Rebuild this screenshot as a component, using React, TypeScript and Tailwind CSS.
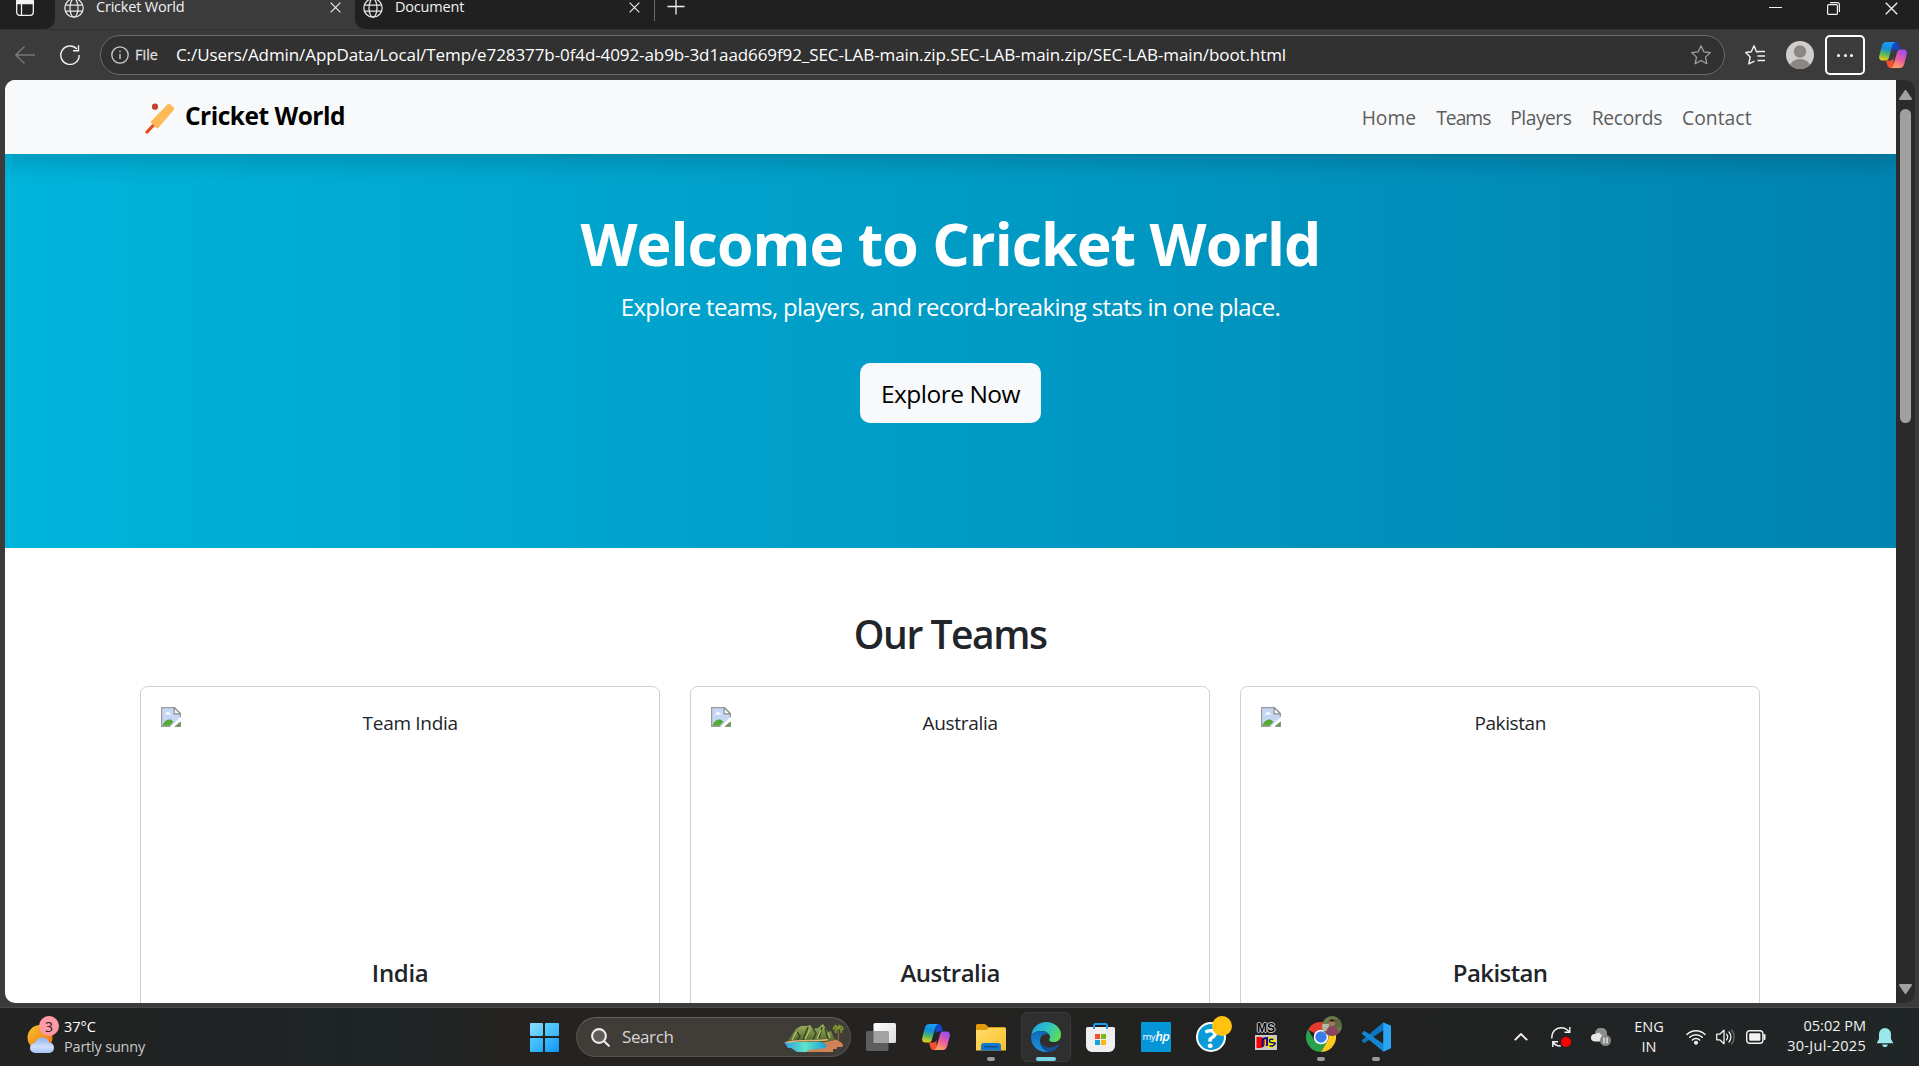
import type { ReactNode } from "react";

function Globe() {
  return (
    <svg className="h-5 w-5 shrink-0" viewBox="0 0 20 20" fill="none" stroke="#e6e6e6" strokeWidth="1.25">
      <circle cx="10" cy="10" r="9.2" />
      <ellipse cx="10" cy="10" rx="4" ry="9.2" />
      <path d="M1.5 7h17M1.5 13h17" />
    </svg>
  );
}

function Cross({ className }: { className: string }) {
  return (
    <svg className={className} viewBox="0 0 12 12" fill="none" stroke="#f2f2f2" strokeWidth="1.2">
      <path d="M.7.7l10.6 10.6M11.3.7L.7 11.3" />
    </svg>
  );
}

function Copilot({ id, className }: { id: string; className: string }) {
  return (
    <svg className={className} viewBox="0 0 28 26">
      <defs>
        <linearGradient id={`${id}a`} x1="0.5" y1="0" x2="0.3" y2="1">
          <stop offset="0" stopColor="#1b9df8" />
          <stop offset="0.35" stopColor="#128fd8" />
          <stop offset="0.65" stopColor="#52b567" />
          <stop offset="1" stopColor="#f4cc10" />
        </linearGradient>
        <linearGradient id={`${id}b`} x1="0.7" y1="0" x2="0.3" y2="1">
          <stop offset="0" stopColor="#9a4df5" />
          <stop offset="0.5" stopColor="#ea5aa0" />
          <stop offset="1" stopColor="#ffa55c" />
        </linearGradient>
      </defs>
      <path d="M13 0h3.400c2 0 2.900 1.400 3.500 3.400L21 7.500h-4.500c-1.600 0-2.400.9-2.900 2.500z" fill="#1746c9" />
      <path d="M15 26h-3.400c-2 0-2.900-1.400-3.500-3.400L7 18.500h4.500c1.600 0 2.400-.9 2.900-2.500z" fill="#f4512f" />
      <path d="M7.500 0h9c-1.700.3-2.600 1.700-3.200 3.800l-3.400 12c-.5 1.800-1.500 2.700-3.200 2.700H3.500C.8 18.500-.4 16.500.3 13.700l2.400-9.500C3.400 1.400 5 0 7.500 0z" fill={`url(#${id}a)`} />
      <path d="M20.500 26h-9c1.700-.3 2.600-1.700 3.200-3.800l3.400-12c.5-1.800 1.500-2.700 3.200-2.700h3.200c2.700 0 3.900 2 3.200 4.800l-2.400 9.500c-.7 2.800-2.300 4.200-4.800 4.200z" fill={`url(#${id}b)`} />
    </svg>
  );
}

function TabStrip() {
  return (
    <div className="flex h-[29px] shrink-0 overflow-hidden bg-[#3b3b3b] text-[14.5px] text-[#f2f2f2]">
      <div className="flex w-[55px] items-start rounded-br-[10px] bg-[#202020] pl-4">
        <svg className="-mt-[2px] h-[18px] w-[18px]" viewBox="0 0 18 18" fill="none" stroke="#f2f2f2" strokeWidth="1.3">
          <rect x="0.700" y="0.700" width="16.600" height="16.600" rx="3" />
          <path d="M.7 5.500V3.700a3 3 0 0 1 3-3h10.600a3 3 0 0 1 3 3v1.800z" fill="#f2f2f2" />
          <path d="M5.500 5.500v11.800" />
        </svg>
      </div>
      <div className="flex h-[15px] w-[300px] items-center pl-[9px] pr-[14px]">
        <Globe />
        <span className="ml-3 self-start whitespace-nowrap leading-[13px] tracking-[-0.2px]">Cricket World</span>
        <Cross className="ml-auto h-[11px] w-[11px]" />
      </div>
      <div className="flex flex-1 items-start rounded-bl-[10px] bg-[#202020]">
        <div className="flex h-[15px] w-[299px] items-center pl-2 pr-[14px]">
          <Globe />
          <span className="ml-3 self-start leading-[13px] tracking-[-0.2px]">Document</span>
          <Cross className="ml-auto h-[11px] w-[11px]" />
        </div>
        <div className="h-[21px] w-px bg-[#6b6b6b]" />
        <svg className="-mt-[3px] ml-3 h-[18px] w-[18px]" viewBox="0 0 18 18" stroke="#f2f2f2" strokeWidth="1.3">
          <path d="M9 .5v17M.5 9.500h17" />
        </svg>
        <div className="ml-auto flex h-[15px] items-center pr-[21px]">
          <div className="h-[1.300px] w-[13px] bg-[#f2f2f2]" />
          <svg className="ml-[45px] mt-[2px] h-[13px] w-[13px]" viewBox="0 0 13 13" fill="none" stroke="#f2f2f2" strokeWidth="1.2">
            <rect x="0.600" y="2.600" width="9.800" height="9.800" rx="1" />
            <path d="M3 .6h7.400a2 2 0 0 1 2 2V10" />
          </svg>
          <Cross className="ml-[45px] mt-[2px] h-[13px] w-[13px]" />
        </div>
      </div>
    </div>
  );
}

function Toolbar() {
  return (
    <div className="flex h-[51px] shrink-0 items-center border-t border-[#333] bg-[#3b3b3b] pl-[15px]">
      <svg className="h-5 w-5" viewBox="0 0 20 20" fill="none" stroke="#777" strokeWidth="1.3">
        <path d="M20 10H.8M9.500 1.500L.8 10l8.700 8.500" />
      </svg>
      <svg className="ml-[25px] h-5 w-5" viewBox="0 0 20 20" fill="none" stroke="#f2f2f2" strokeWidth="1.400">
        <path d="M16.800 4A9.200 9.200 0 1 0 19.200 10M18.500.3v5.500H13" />
      </svg>
      <div className="ml-5 flex h-10 w-[1625px] items-center rounded-full border-[1.500px] border-[#6a6a6a] bg-[#313131] pl-[10px] pr-[13px]">
        <svg className="h-[18px] w-[18px]" viewBox="0 0 18 18" fill="none" stroke="#d0d0d0" strokeWidth="1.300">
          <circle cx="9" cy="9" r="8.200" />
          <path d="M9 8v5M9 4.800v1.500" />
        </svg>
        <span className="ml-1.5 w-[41px] text-[14.500px] text-[#dedede] [-webkit-text-stroke:0.300px_#dedede]">File</span>
        <span className="whitespace-nowrap text-[17px] tracking-[-0.09px] text-white">
          C:/Users/Admin/AppData/Local/Temp/e728377b-0f4d-4092-ab9b-3d1aad669f92_SEC-LAB-main.zip.SEC-LAB-main.zip/SEC-LAB-main/boot.html
        </span>
        <svg className="ml-auto h-5 w-5" viewBox="0 0 20 20" fill="none" stroke="#a0a0a0" strokeWidth="1.300" strokeLinejoin="round">
          <path d="M10 .8l2.800 6 6.500.8-4.800 4.500 1.300 6.600L10 15.500l-5.800 3.200 1.300-6.600L.7 7.600l6.500-.8z" />
        </svg>
      </div>
      <svg className="ml-5 h-5 w-5" viewBox="0 0 20 20" fill="none" stroke="#f2f2f2" strokeWidth="1.400" strokeLinejoin="round">
        <path d="M13.500 7l-2-.3L9 .8 6.300 6.700.7 7.500l4.500 4.500-1.400 6.900 5.700-2.700M12.500 6.500H20M12.500 11H20M12.500 15.500H20" />
      </svg>
      <svg className="ml-[21px] h-7 w-7" viewBox="0 0 28 28">
        <defs>
          <clipPath id="avatar"><circle cx="14" cy="14" r="14" /></clipPath>
        </defs>
        <g clipPath="url(#avatar)">
          <rect width="28" height="28" fill="#d0ceca" />
          <circle cx="14" cy="10.500" r="6.200" fill="#8b8784" />
          <ellipse cx="14" cy="25.500" rx="10" ry="7.500" fill="#8b8784" />
        </g>
      </svg>
      <div className="ml-[11px] flex h-10 w-10 items-center justify-center gap-[3.500px] rounded-[5px] border-2 border-white">
        <div className="h-[3px] w-[3px] rounded-full bg-white" />
        <div className="h-[3px] w-[3px] rounded-full bg-white" />
        <div className="h-[3px] w-[3px] rounded-full bg-white" />
      </div>
      <Copilot id="tb" className="ml-[14px] h-[26px] w-7" />
    </div>
  );
}

function BrokenImage() {
  return (
    <svg className="h-5 w-5 shrink-0" viewBox="0 0 20 20">
      <path d="M.6.6h12.800l6 6V12L10.500 19.400H.6z" fill="#c6d6f5" stroke="#9a9a9a" strokeWidth="1.200" />
      <path d="M1.200 18.800c1.500-4.500 5.500-7.300 9.300-5.800l2 2-4 3.800z" fill="#57a935" />
      <path d="M4 7.500c0-1.200 1.200-1.500 1.500-1.300.4-1.600 2.600-1.700 3 0 1.400 0 1.700.7 1.700 1.300z" fill="#fff" />
      <path d="M13.200.6v6.200h6.200z" fill="#fff" stroke="#8c8c8c" strokeWidth="1.200" />
      <path d="M9 20L20 9.500v3.500L13 20z" fill="#fff" />
      <path d="M14 19.500l5.500-4.500v4.500z" fill="#57a935" stroke="#8c8c8c" />
    </svg>
  );
}

function TeamCard({ alt, altClass, name, nameClass }: { alt: string; altClass: string; name: string; nameClass: string }) {
  return (
    <div className="flex h-[420px] flex-1 flex-col rounded-[7.500px] border border-[#d0d1d2] bg-white px-5 pt-5">
      <div className="flex h-[250px]">
        <BrokenImage />
        <span className={`flex-1 pt-[1px] text-center text-[19px] leading-[30px] ${altClass}`}>{alt}</span>
      </div>
      <h5 className={`mt-[-1px] text-center text-[24px] font-semibold leading-[34px] ${nameClass}`}>{name}</h5>
    </div>
  );
}

function Page() {
  return (
    <div className="flex flex-1 flex-col overflow-hidden bg-white text-[#212529]">
      <nav className="relative z-10 flex h-[74px] shrink-0 items-center bg-[#f8f9fa] pl-[139px] pr-[144px] shadow-[0_10px_20px_rgba(0,0,0,0.15)]">
        <svg className="mt-[3px] h-[31px] w-[31px]" viewBox="0 0 30 31">
          <circle cx="10.500" cy="3.700" r="3.100" fill="#c5402b" />
          <path d="M2.500 29L11 20" stroke="#e64a19" strokeWidth="3.200" strokeLinecap="round" />
          <path d="M22.800 1.400c1-1 2.200-.9 3.200 0l2.800 2.700c1 1 1 2.200.2 3.200L14 24.800c-.6.600-1.500.6-2.200 0L6.900 20.300c-.7-.7-.7-1.500 0-2.200z" fill="#ffb957" />
        </svg>
        <span className="-mt-[2px] ml-[10px] text-[24.500px] font-bold leading-8 tracking-[-0.500px] text-black">Cricket World</span>
        <div className="ml-auto mt-[2px] flex gap-5 text-[19.300px] text-[#5b5d5f]">
          <span className="w-[54.500px] tracking-[-0.050px]">Home</span>
          <span className="w-[54px] tracking-[-1px]">Teams</span>
          <span className="w-[61.500px] tracking-[-0.500px]">Players</span>
          <span className="w-[70.300px] tracking-[-0.300px]">Records</span>
          <span className="w-[70px] tracking-[0.040px]">Contact</span>
        </div>
      </nav>
      <section className="flex h-[394px] shrink-0 flex-col items-center bg-[linear-gradient(90deg,#00b4db,#0083b0)] pt-[53px]">
        <h1 className="text-[59px] font-bold leading-[72px] tracking-[-0.97px] text-white">Welcome to Cricket World</h1>
        <p className="mt-[10px] text-[24px] leading-[36px] tracking-[-0.65px] text-white">
          Explore teams, players, and record-breaking stats in one place.
        </p>
        <button className="mt-[38px] h-[60px] w-[181px] rounded-[10px] bg-[#f8f9fa] pt-[2px] text-[24.500px] tracking-[-0.5px] text-black">
          Explore Now
        </button>
      </section>
      <section className="flex flex-col pl-[135.200px] pr-[135.800px] pt-[62px]">
        <h2 className="text-center text-[39px] font-semibold leading-[48px] tracking-[-1.450px]">Our Teams</h2>
        <div className="mt-[28px] flex gap-[30px]">
          <TeamCard alt="Team India" altClass="tracking-[-0.300px]" name="India" nameClass="tracking-[-0.300px]" />
          <TeamCard alt="Australia" altClass="tracking-[-0.300px]" name="Australia" nameClass="tracking-[-0.500px]" />
          <TeamCard alt="Pakistan" altClass="tracking-[-0.400px]" name="Pakistan" nameClass="tracking-[-0.600px]" />
        </div>
      </section>
    </div>
  );
}

function Scrollbar() {
  return (
    <div className="flex w-[19px] shrink-0 flex-col items-center bg-[#2b2b2b] pb-[9px] pt-[10px]">
      <svg className="h-[10px] w-[13px]" viewBox="0 0 13 10">
        <path d="M6.500 1L12 9H1z" fill="#a0a0a0" stroke="#a0a0a0" strokeWidth="2" strokeLinejoin="round" />
      </svg>
      <div className="mt-[9px] h-[314px] w-[11px] rounded-full bg-[#a0a0a0]" />
      <svg className="mt-auto h-[10px] w-[13px]" viewBox="0 0 13 10">
        <path d="M6.500 9L12 1H1z" fill="#a0a0a0" stroke="#a0a0a0" strokeWidth="2" strokeLinejoin="round" />
      </svg>
    </div>
  );
}

function TaskIcon({ children, active, running }: { children: ReactNode; active?: boolean; running?: boolean }) {
  return (
    <div className={`relative flex h-[50px] w-[50px] shrink-0 items-center justify-center rounded-md ${active ? "border border-[#3a3a3a] bg-[#2f2f2f]" : ""}`}>
      {children}
      {active && <div className="absolute bottom-0 h-1 w-5 rounded-full bg-[#76d3e0]" />}
      {running && <div className="absolute bottom-[1px] h-1 w-2 rounded-full bg-[#9a9a9a]" />}
    </div>
  );
}

function Weather() {
  return (
    <div className="flex w-[519px] items-center pl-[27px]">
      <div className="relative -mt-[4px] h-[38px] w-8">
        <svg className="h-[38px] w-8" viewBox="0 0 32 38">
          <defs>
            <linearGradient id="sun" x1="0" y1="0" x2="1" y2="1">
              <stop offset="0" stopColor="#f7c52c" />
              <stop offset="1" stopColor="#ec6a13" />
            </linearGradient>
            <linearGradient id="cloud" x1="0" y1="0" x2="0" y2="1">
              <stop offset="0" stopColor="#8fb2f2" />
              <stop offset="0.600" stopColor="#cfe0fb" />
              <stop offset="1" stopColor="#a6c3f6" />
            </linearGradient>
          </defs>
          <circle cx="13" cy="21.500" r="12.500" fill="url(#sun)" />
          <path d="M8 37a5 5 0 0 1 0-10 7.400 7.400 0 0 1 14.200-.5A5.300 5.300 0 0 1 22.500 37z" fill="url(#cloud)" />
        </svg>
        <div className="absolute left-3 top-0 flex h-5 w-5 items-center justify-center rounded-full bg-[#ff99a4] text-[14px] text-[#222]">3</div>
      </div>
      <div className="ml-[5px] text-[14.500px] leading-5">
        <div className="text-white">37°C</div>
        <div className="tracking-[-0.200px] text-[#c8c8c8]">Partly sunny</div>
      </div>
    </div>
  );
}

function Island() {
  return (
    <svg className="h-[30px] w-[60px]" viewBox="0 0 60 30">
      <defs>
        <linearGradient id="lagoon" x1="0" y1="0" x2="1" y2="0">
          <stop offset="0" stopColor="#2b9fe0" />
          <stop offset="0.500" stopColor="#5fe3c8" />
          <stop offset="1" stopColor="#1da0da" />
        </linearGradient>
        <linearGradient id="hill" x1="0" y1="0" x2="0" y2="1">
          <stop offset="0" stopColor="#9db25c" />
          <stop offset="1" stopColor="#4a5f2b" />
        </linearGradient>
      </defs>
      <path d="M6 17L50 15C57 17 61 21 58 23H53V25H49V28H14V26H24z" fill="#cf8258" />
      <path d="M3 18l9-13 5-3h6l3-1 3 4 5-1 5-4 5 8 3-1 4 9-14 3z" fill="url(#hill)" />
      <path d="M12 7l4 5-3 5M24 3l-5 13M29 5l3 4-3 7M38 3l-3 11M41 4l3 11" stroke="#36491f" strokeWidth="1.500" fill="none" />
      <path d="M8 16l5-9M21 15l5-10M33 15l4-9M46 14l-2-5" stroke="#b7c66c" strokeWidth="1.200" />
      <path d="M0 18h26c10-1 18 1 16 5-1 3-20 1-19 5H13l-6-4H4z" fill="url(#lagoon)" />
      <path d="M2 18.500c14-3 32-1 42-3" stroke="#e8b27e" strokeWidth="1.500" fill="none" />
      <path d="M54 16c1-4 .5-7 0-11" stroke="#8a6534" strokeWidth="1.500" fill="none" />
      <path d="M54 4c-3-2-5-1-4 2M54 4c3-3 5-1 5 2M54 4c-2 0-3 3-2 5M54 4c3 0 4 3 3 5M51 1l3 3 2-3" stroke="#809b27" strokeWidth="1.700" fill="none" />
    </svg>
  );
}

function Taskbar() {
  return (
    <div className="flex h-[58px] shrink-0 items-center bg-[linear-gradient(90deg,#222221,#1e2427_20%,#242321_26%,#242321_50%,#212121_70%,#212425_85%,#202525)]">
      <Weather />
      <TaskIcon>
        <div className="grid h-[29px] w-[29px] grid-cols-2 gap-[1.500px]">
          <div className="rounded-[1px] bg-gradient-to-br from-[#8bdcff] to-[#4fc6fb]" />
          <div className="rounded-[1px] bg-gradient-to-br from-[#5bd0ff] to-[#35b5f8]" />
          <div className="rounded-[1px] bg-gradient-to-br from-[#4fcaff] to-[#26a9f7]" />
          <div className="rounded-[1px] bg-gradient-to-br from-[#3bbdfd] to-[#0b93f5]" />
        </div>
      </TaskIcon>
      <div className="ml-[7px] mr-[5px] flex h-10 w-[275px] items-center rounded-full border border-[#55524e] border-t-[#65625e] bg-[#403d39] pl-[14px] pr-1.5">
        <svg className="h-[19px] w-[19px]" viewBox="0 0 19 19" fill="#605d59" stroke="#ececec" strokeWidth="2.100" strokeLinecap="round">
          <circle cx="8" cy="8" r="6.900" />
          <path d="M13.200 13.200l4.600 4.600" />
        </svg>
        <span className="ml-3 text-[17px] tracking-[-0.400px] text-[#d8d6d4]">Search</span>
        <div className="ml-auto mt-1"><Island /></div>
      </div>
      <div className="flex gap-[5px]">
        <TaskIcon>
          <svg className="h-[28px] w-[30px]" viewBox="0 0 30 28">
            <defs>
              <linearGradient id="pane" x1="0" y1="0" x2="1" y2="1">
                <stop offset="0" stopColor="#fff" />
                <stop offset="1" stopColor="#dcdcdc" />
              </linearGradient>
            </defs>
            <rect x="7.500" width="22.500" height="20" rx="1.500" fill="url(#pane)" />
            <rect y="8" width="22.500" height="20" rx="1.500" fill="#5d5d5d" />
            <path d="M7.500 8h15v12h-15z" fill="#a3a3a3" />
          </svg>
        </TaskIcon>
        <TaskIcon><Copilot id="task" className="h-[26px] w-7" /></TaskIcon>
        <TaskIcon running>
          <svg className="h-[27px] w-[30px]" viewBox="0 0 30 27">
            <defs>
              <linearGradient id="folder" x1="0" y1="0" x2="1" y2="1">
                <stop offset="0" stopColor="#ffdc6b" />
                <stop offset="1" stopColor="#f9bf2c" />
              </linearGradient>
            </defs>
            <path d="M0 1.500A1.500 1.500 0 0 1 1.500 0H9l3.500 3H28.500A1.500 1.500 0 0 1 30 4.500V12H0z" fill="#e09b0c" />
            <path d="M0 6h10l3-2h15.500A1.500 1.500 0 0 1 30 5.500V26.500H0z" fill="url(#folder)" />
            <path d="M5 26.500V22a3 3 0 0 1 3-3h14a3 3 0 0 1 3 3v4.500z" fill="#1478cf" />
            <path d="M8.500 22.700h13" stroke="#0b4f92" strokeWidth="1.500" strokeLinecap="round" />
          </svg>
        </TaskIcon>
        <TaskIcon active>
          <svg className="h-[30px] w-[30px]" viewBox="0 0 30 30">
            <defs>
              <linearGradient id="edgeTop" x1="0" y1="0.300" x2="1" y2="0.700">
                <stop offset="0" stopColor="#1ba6e6" />
                <stop offset="0.500" stopColor="#30c3c4" />
                <stop offset="1" stopColor="#5fe04b" />
              </linearGradient>
              <linearGradient id="edgeLeft" x1="0.600" y1="0" x2="0.400" y2="1">
                <stop offset="0" stopColor="#1164b4" />
                <stop offset="1" stopColor="#1f94e0" />
              </linearGradient>
            </defs>
            <path d="M.3 13C1.500 5 8 0 15 0c8.500 0 15 6 15 12.500C30 17.500 26.800 20 22.800 20c-3.800 0-5.300-1.500-4.300-3 2-3-1-8-8-8C5.500 9 2 11 .3 13z" fill="url(#edgeTop)" />
            <path d="M0 15c0-4 5-6 9.500-6 5.500 0 9.500 3 9.500 6.500 0-1.500-1.500-3.500-4-3.500-3.500 0-6 3-6 7 0 6 5 9.500 10 10.500C17 30 16 30 15 30 6.500 30 0 23.500 0 15z" fill="url(#edgeLeft)" />
            <path d="M9 18.500c.8 4.500 5 7 9.500 7 3.500 0 6-1.200 8.200-2.700.8-.4 1.500.2 1 1C25 28.200 21 30 17.500 30 12.500 29 9 24.500 9 18.500z" fill="#12509b" />
          </svg>
        </TaskIcon>
        <TaskIcon>
          <svg className="-ml-[1px] h-[29px] w-[29px]" viewBox="0 0 29 29">
            <path d="M1.500 4h26A1.500 1.500 0 0 1 29 5.500V23a6 6 0 0 1-6 6H6a6 6 0 0 1-6-6V5.500A1.500 1.500 0 0 1 1.500 4z" fill="#efefef" />
            <path d="M9 11h5v5H9z" fill="#f0502a" />
            <path d="M15 11h5v5h-5z" fill="#7cb813" />
            <path d="M9 17h5v5H9z" fill="#12a2ea" />
            <path d="M15 17h5v5h-5z" fill="#fcb713" />
            <path d="M8 6V2.500A1.500 1.500 0 0 1 9.500 1h10A1.500 1.500 0 0 1 21 2.500V6" fill="none" stroke="#1d9bf0" strokeWidth="2" />
          </svg>
        </TaskIcon>
        <TaskIcon>
          <div className="flex h-[30px] w-[30px] items-center justify-center rounded-[1px] bg-[#0496d7] text-[9.500px] leading-none tracking-[-0.500px] text-white">
            my<span className="-mt-px text-[13px] font-semibold italic">hp</span>
          </div>
        </TaskIcon>
        <TaskIcon>
          <div className="relative flex h-[30px] w-[30px] items-center justify-center rounded-full border-2 border-white bg-[#0a9ad8] text-[27px] font-bold leading-none text-white">
            ?
            <div className="absolute -right-[8px] -top-[8px] h-5 w-5 rounded-full bg-[#ffc20e]" />
          </div>
        </TaskIcon>
        <TaskIcon>
          <div className="flex h-7 w-[22px] flex-col items-center">
            <div className="font-['Liberation_Sans'] text-[12px] font-bold leading-[11px] text-black [text-shadow:0_0_1px_#fff,1px_0_0_#bbb,-1px_0_0_#bbb,0_1px_0_#bbb,0_-1px_0_#bbb]">MS</div>
            <svg className="mt-[1px] h-[15px] w-[22px]" viewBox="0 0 22 15">
              <rect width="22" height="15" fill="#c9c9c9" />
              <path d="M1.500 2H6q4 1 4 5.500T6 13H1.500z" fill="#f00" />
              <circle cx="15.500" cy="7.500" r="5.700" fill="#f5ee10" />
              <path d="M7.500 12V6q0-3 4.500-3v8" fill="none" stroke="#10107a" strokeWidth="2.200" />
              <path d="M18.500 4.500q-4-1-4 1.200t4 2-1 3.500l-3-.5" fill="none" stroke="#10107a" strokeWidth="1.500" />
            </svg>
          </div>
        </TaskIcon>
        <TaskIcon running>
          <div className="relative">
            <svg className="h-[30px] w-[30px]" viewBox="0 0 30 30">
              <path d="M15 15L2 7.500A15 15 0 0 1 28 7.500H15z" fill="#e33b2e" />
              <path d="M2 7.500A15 15 0 0 0 15 30l6.500-11.300L15 15 8.500 18.700z" fill="#2aa24c" />
              <path d="M28 7.500A15 15 0 0 1 15 30l6.500-11.300A7.500 7.500 0 0 0 15 7.500z" fill="#fcc91f" />
              <circle cx="15" cy="15" r="7.300" fill="#fff" />
              <circle cx="15" cy="15" r="5.700" fill="#3b7ded" />
            </svg>
            <svg className="absolute -right-[6px] -top-[6px] h-5 w-5" viewBox="0 0 20 20">
              <defs>
                <clipPath id="profile"><circle cx="10" cy="10" r="10" /></clipPath>
              </defs>
              <g clipPath="url(#profile)">
                <rect width="20" height="20" fill="#6b7a4c" />
                <path d="M0 8h7v7H0z" fill="#b9b5a4" />
                <path d="M12 3h8v8h-8z" fill="#59683d" />
                <path d="M4 20c0-7 2-10 6-10s7 3 7 10z" fill="#8c4560" />
                <circle cx="10" cy="6.500" r="3.200" fill="#a8765c" />
                <path d="M6.500 5.500q3.500-5 7 0z" fill="#2b211d" />
              </g>
            </svg>
          </div>
        </TaskIcon>
        <TaskIcon running>
          <svg className="h-[30px] w-[30px]" viewBox="0 0 30 30">
            <path d="M.5 18.500L3.200 21.300 22.500 8V.3z" fill="#0d74c0" />
            <path d="M.5 11.500L3.200 8.700 22.500 22v7.700z" fill="#1387d2" />
            <path d="M22.200.2L30 3.700V26.300L22.200 29.800z" fill="#2aa5f3" />
          </svg>
        </TaskIcon>
      </div>
      <div className="ml-auto flex items-center pr-[26px] text-[14.500px] leading-5 text-[#f3f3f3]">
        <svg className="h-2 w-[14px]" viewBox="0 0 14 8" fill="none" stroke="#f3f3f3" strokeWidth="1.900">
          <path d="M.8 7.200L7 1l6.200 6.200" />
        </svg>
        <svg className="ml-[23px] h-5 w-5" viewBox="0 0 20 20" fill="none" stroke="#f3f3f3" strokeWidth="1.400">
          <path d="M.8 11.500C.5 4.500 5 .8 10 .8c3.500 0 6.500 1.700 8.300 4.500M18.800 0v5.300h-5.300M1.800 20v-5.300H7M1.800 15a9 9 0 0 0 8 4" />
          <circle cx="15" cy="15" r="5" fill="#f00" stroke="none" />
        </svg>
        <svg className="ml-5 h-[18px] w-5" viewBox="0 0 20 18">
          <path d="M4 5a6 6 0 0 1 12 1l1 6H8z" fill="#8d8d8d" />
          <path d="M3.500 13.500A3.700 3.700 0 0 1 4 6l4-1.500 5 5-4 4z" fill="#e6e6e6" />
          <circle cx="14.500" cy="12.500" r="5.500" fill="#858585" />
          <path d="M13 9.500v6M16 9.500v6" stroke="#fff" strokeWidth="1.200" />
        </svg>
        <div className="ml-[22px] w-8 text-center">ENG<br />IN</div>
        <svg className="ml-[21px] h-4 w-5" viewBox="0 0 20 16" fill="none" stroke="#f3f3f3" strokeWidth="1.500" strokeLinecap="round">
          <path d="M1 5.500a12.700 12.700 0 0 1 18 0M3.700 8.300a9 9 0 0 1 12.600 0M6.300 11a5.300 5.300 0 0 1 7.400 0" />
          <circle cx="10" cy="13.700" r="1.300" fill="#f3f3f3" />
        </svg>
        <svg className="ml-[10px] h-4 w-5" viewBox="0 0 20 16" fill="none" stroke="#f3f3f3" strokeWidth="1.300" strokeLinecap="round" strokeLinejoin="round">
          <path d="M.7 5.200h3L8 1.200v13.600l-4.300-4h-3zM10.500 5.200a4.300 4.300 0 0 1 0 5.600M13 3a7.500 7.500 0 0 1 0 10" />
          <path d="M15.500 1a10.500 10.500 0 0 1 0 14" stroke="#6e6e6e" />
        </svg>
        <svg className="ml-[10px] h-[14px] w-5" viewBox="0 0 20 14" fill="none" stroke="#f3f3f3" strokeWidth="1.400">
          <rect x="0.700" y="0.700" width="16.200" height="12.600" rx="3" />
          <rect x="3.200" y="3.200" width="11.200" height="7.600" rx="1" fill="#f3f3f3" stroke="none" />
          <path d="M18.500 5v4" strokeWidth="2" strokeLinecap="round" />
        </svg>
        <div className="-mt-[2px] w-[100px] text-right text-[14.500px]">
          05:02 PM<br /><span className="tracking-[0.300px]">30-Jul-2025</span>
        </div>
        <svg className="ml-[11px] h-[19px] w-4" viewBox="0 0 16 19" fill="#9ae7ec">
          <path d="M8 0a6 6 0 0 1 6 6v5l2 3.500v.8H0v-.8L2 11V6a6 6 0 0 1 6-6zM5.300 16.400h5.400a2.700 2.700 0 0 1-5.400 0z" />
        </svg>
      </div>
    </div>
  );
}

export default function App() {
  return (
    <div className="flex h-[1066px] w-[1919px] flex-col overflow-hidden bg-[#3b3b3b] font-['Open_Sans',sans-serif]">
      <TabStrip />
      <Toolbar />
      <div className="flex h-[928px] shrink-0 border-b border-[#484848] pb-1 pl-[5px] pr-1">
        <div className="flex flex-1 overflow-hidden rounded-[10px]">
          <Page />
          <Scrollbar />
        </div>
      </div>
      <Taskbar />
    </div>
  );
}
